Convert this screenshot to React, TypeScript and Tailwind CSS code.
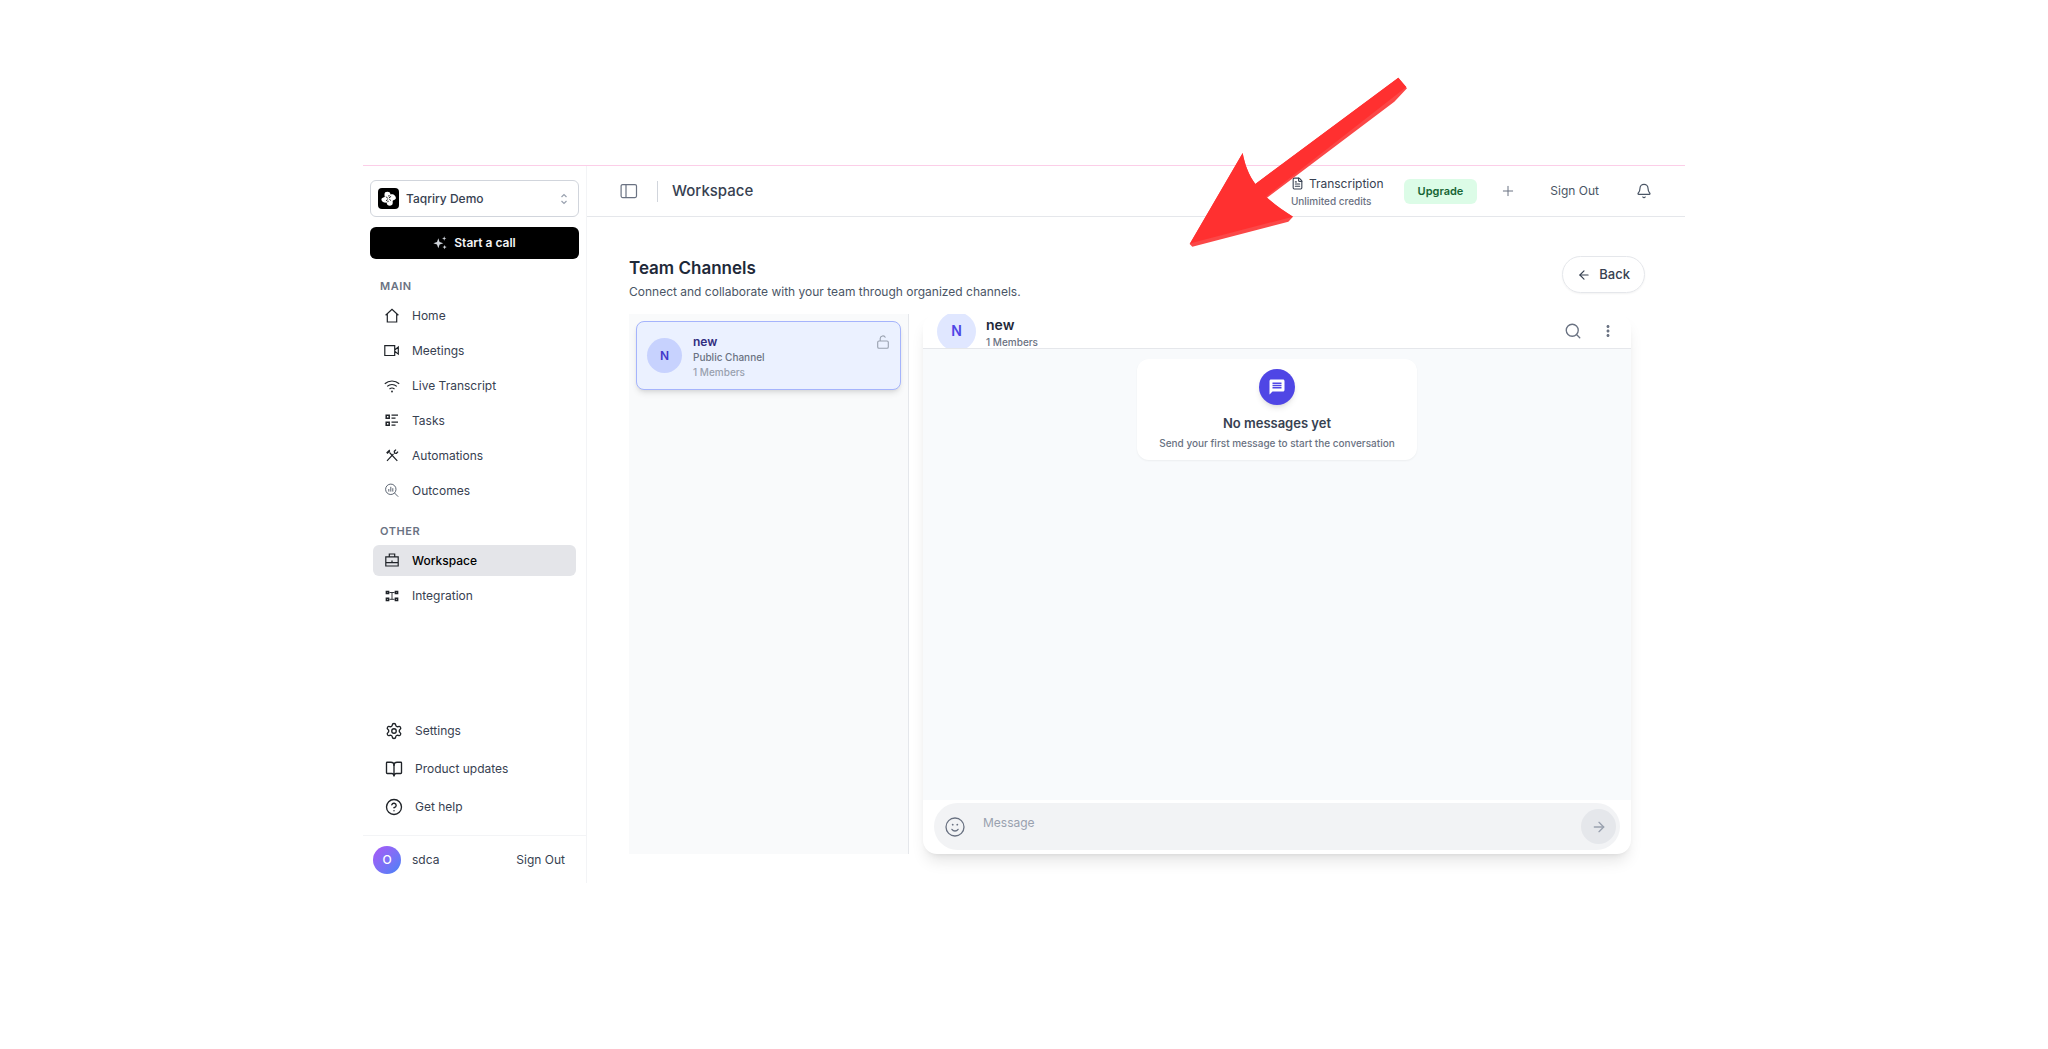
import type { ReactNode } from "react";
import {
  ArrowLeft,
  ArrowRight,
  Bell,
  BookOpen,
  CircleHelp,
  FileText,
  Plus,
  Search,
  Settings,
} from "lucide-react";
import { MdMessage, MdMoreVert } from "react-icons/md";

function Svg({ children, className = "text-[#1f2328]" }: { children: ReactNode; className?: string }) {
  return (
    <svg
      viewBox="0 0 16 16"
      fill="none"
      stroke="currentColor"
      strokeWidth="1.2"
      className={`size-4 shrink-0 ${className}`}
      aria-hidden="true"
    >
      {children}
    </svg>
  );
}

const HomeIcon = () => (
  <Svg>
    <path d="M1.600 7.200 8 1.200l6.400 6M3.300 6v8h9.400V6" />
  </Svg>
);

const MeetingsIcon = () => (
  <Svg>
    <path d="M.8 2.600h9.900v9.900H.8zM10.700 7l3.600-2.900v7l-3.600-2.900" />
  </Svg>
);

const WifiIcon = () => (
  <Svg>
    <path d="M.8 5.700c4.100-3.600 10.300-3.600 14.400 0M3.200 8.400c2.800-2.300 6.800-2.300 9.600 0M5.500 11c1.500-1.200 3.500-1.200 5 0" />
    <circle cx="8" cy="13.500" r=".9" fill="currentColor" stroke="none" />
  </Svg>
);

const TasksIcon = () => (
  <Svg>
    <path d="M2.200 2.200h3v3h-3zM2.200 9.200h3v3h-3z" strokeWidth="1.500" />
    <path d="M7.500 2.200H14M7.500 5.200h4M7.500 9.200H14M7.500 12.200h4" />
  </Svg>
);

const AutomationsIcon = () => (
  <Svg>
    <path d="m3 12.800 6.500-7M13.300 12.800 5.500 4.500" strokeWidth="1.200" />
    <path d="M2.600 4.900 5.800 2M3 5.500l2.800-2.600" strokeWidth="1.300" />
    <path d="M12 1.600 10.300 3.300l.3 1.800 1.900.2L14 3.600" strokeWidth="1.300" />
  </Svg>
);

const OutcomesIcon = () => (
  <Svg className="text-[#4b5563]">
    <circle cx="6.800" cy="6.300" r="5.200" strokeWidth=".9" />
    <path d="m10.500 10 3.700 3.700M4.800 8.600V6M6.800 8.600V3.800M8.800 8.600V5.200" strokeWidth=".9" />
  </Svg>
);

const WorkspaceIcon = () => (
  <Svg>
    <path d="M1.800 3.800h12.400V13H1.800zM5.300 3.800V1h5.400v2.800M1.800 9.600h12.400M8 7.600v1.600" />
  </Svg>
);

const IntegrationIcon = () => (
  <Svg>
    <path
      d="M2.400 3.400h2.200v2.200H2.400zM11.400 3.400h2.200v2.200h-2.200zM2.400 10.200h2.200v2.200H2.400zM11.400 10.200h2.200v2.200h-2.200z"
      strokeWidth="1.500"
    />
    <path d="M5.400 4.500h5.200M5.400 11.300h5.200M8 4.500v6.800" strokeWidth=".9" />
  </Svg>
);

const mainLinks = [
  { label: "Home", icon: <HomeIcon /> },
  { label: "Meetings", icon: <MeetingsIcon /> },
  { label: "Live Transcript", icon: <WifiIcon /> },
  { label: "Tasks", icon: <TasksIcon /> },
  { label: "Automations", icon: <AutomationsIcon /> },
  { label: "Outcomes", icon: <OutcomesIcon /> },
];

const otherLinks = [
  { label: "Workspace", icon: <WorkspaceIcon />, active: true },
  { label: "Integration", icon: <IntegrationIcon /> },
];

const footerLinks = [
  { label: "Settings", icon: <Settings size={18} strokeWidth={1.8} /> },
  { label: "Product updates", icon: <BookOpen size={18} strokeWidth={1.8} /> },
  { label: "Get help", icon: <CircleHelp size={18} strokeWidth={1.8} /> },
];

function NavSection({
  title,
  links,
}: {
  title: string;
  links: { label: string; icon: ReactNode; active?: boolean }[];
}) {
  return (
    <section>
      <h2 className="pl-2.5 text-[11px] leading-4 font-semibold tracking-wider text-gray-500">{title}</h2>
      <ul className="mt-1.5 flex flex-col gap-1 px-[3px]">
        {links.map((l) => (
          <li key={l.label}>
            <a
              href="#"
              className={
                l.active
                  ? "flex h-[31px] items-center gap-3 rounded-md bg-[#e4e5e9] px-[11px] text-xs font-medium text-black"
                  : "flex h-[31px] items-center gap-3 rounded-md px-[11px] text-xs text-[#374151]"
              }
            >
              {l.icon}
              {l.label}
            </a>
          </li>
        ))}
      </ul>
    </section>
  );
}

function Logo() {
  return (
    <svg viewBox="0 0 21 21" className="size-[21px] shrink-0" aria-hidden="true">
      <rect width="21" height="21" rx="4" fill="#000" />
      <path
        d="M7.200 4.200c1.500-.9 3.600-.6 4.600.4.500.6.500 1.300.7 1.900 1.300-.5 3.300-.3 4.200.9.900 1 1.600 2.600 1 3.300-.8 1-2.300 1.300-3.100 2.200.4 1.500.2 3.300-.8 4.200-1.200.9-3.300.7-4.200-.2-.6-.6-.7-1.600-1.100-2.400-1.400.3-3.100.1-4-.9-.8-.9-1.500-2.300-.8-3.200.7-.8 2.300-.9 3.100-1.700-.4-1.300-.6-3.500.4-4.500z"
        fill="#fff"
      />
      <path
        d="m8.200 8.600 1.500 1.900M13.100 8.400l-2.200 1.400M8 12.700l1.700-1M12.900 12.500l-1.600-1.300M11.100 7l-.3 1.500M9.800 14.200l.4-1.400"
        stroke="#000"
        strokeWidth=".9"
      />
    </svg>
  );
}

function Sidebar() {
  return (
    <aside className="flex w-56 shrink-0 flex-col border-r border-gray-100">
      <div className="px-[7px] pt-3.5">
        <button className="flex h-[37px] w-full items-center rounded-md border border-gray-300 px-[7px] text-xs font-medium text-[#374151]">
          <Logo />
          <span className="ml-[7px]">Taqriry Demo</span>
          <svg
            viewBox="0 0 8 12"
            className="ml-auto mr-[3px] h-3 w-2 text-gray-400"
            fill="none"
            stroke="currentColor"
            strokeWidth="1.200"
            aria-hidden="true"
          >
            <path d="M1.500 4 4 1.500 6.500 4M1.500 8 4 10.500 6.500 8" />
          </svg>
        </button>
        <button className="mt-2.5 flex h-8 w-full items-center justify-center gap-[7px] rounded-md bg-black text-xs font-semibold text-gray-100">
          <svg viewBox="0 0 14 14" className="size-3.5 text-gray-300" fill="currentColor" aria-hidden="true">
            <path d="M5.300 2.300 6.600 6l3.700 1.200-3.700 1.300-1.300 3.700L4 8.500.3 7.200 4 6z" />
            <path d="m11.200.3.6 1.600 1.600.6-1.600.6-.6 1.600-.6-1.600L9 2.500l1.600-.6zM11.600 9l.6 1.500 1.500.6-1.500.6-.6 1.500-.6-1.500-1.500-.6 1.500-.6z" />
          </svg>
          Start a call
        </button>
        <nav aria-label="Primary" className="mt-[19px] flex flex-col gap-[17px]">
          <NavSection title="MAIN" links={mainLinks} />
          <NavSection title="OTHER" links={otherLinks} />
        </nav>
      </div>
      <ul className="mt-auto flex flex-col gap-1.5 px-[22px] pb-3">
        {footerLinks.map((l) => (
          <li key={l.label}>
            <a href="#" className="flex h-8 items-center gap-3 text-xs text-[#374151]">
              <span className="text-[#1f2328]">{l.icon}</span>
              {l.label}
            </a>
          </li>
        ))}
      </ul>
      <div className="flex h-12 items-center border-t border-gray-100 pr-[21px] pl-2.5 text-xs text-[#374151]">
        <span className="grid size-7 place-items-center rounded-full bg-linear-to-br from-[#a855f7] to-[#3b82f6] font-medium text-white">
          O
        </span>
        <span className="ml-[11px]">sdca</span>
        <button className="ml-auto">Sign Out</button>
      </div>
    </aside>
  );
}

function TopBar() {
  return (
    <header className="flex h-[51px] items-center border-b border-gray-200 px-[33px] text-gray-600">
      <button aria-label="Toggle sidebar" className="text-gray-500">
        <svg
          viewBox="0 0 18 16"
          className="h-4 w-[18px]"
          fill="none"
          stroke="currentColor"
          strokeWidth="1.200"
          aria-hidden="true"
        >
          <rect x="1.100" y="1.600" width="15.400" height="13" rx="1.500" />
          <path d="M6 1.600v13" />
        </svg>
      </button>
      <div className="ml-[19px] h-[21px] w-px bg-gray-300" />
      <h1 className="ml-3.5 text-[15px] font-medium text-[#374151]">Workspace</h1>
      <div className="ml-auto flex items-center">
        <div className="pt-[3px]">
          <div className="flex items-center gap-[5px] text-xs leading-4 text-[#374151]">
            <FileText size={13} strokeWidth={2} />
            Transcription
          </div>
          <div className="text-[10px] leading-[18px] font-medium text-gray-500">Unlimited credits</div>
        </div>
        <button className="ml-5 h-[25px] rounded-md bg-[#dcfce7] px-3.5 text-[11px] font-semibold text-[#166534]">
          Upgrade
        </button>
        <button aria-label="Add" className="ml-[23px] text-gray-500">
          <Plus size={16} strokeWidth={1.5} />
        </button>
        <button className="ml-[34px] text-xs">Sign Out</button>
        <button aria-label="Notifications" className="ml-[37px]">
          <Bell size={16} strokeWidth={1.8} />
        </button>
      </div>
    </header>
  );
}

function ChannelList() {
  return (
    <div className="w-[280px] shrink-0 border-r border-gray-200 bg-[#f9fafb] px-[7px] pt-[7px]">
      <button className="flex h-[69px] w-full items-center rounded-lg border border-[#a5b4fc] bg-[#ebf1ff] pr-[11px] pl-2.5 text-left shadow-md">
        <span className="grid size-[35px] place-items-center rounded-full bg-[#c7d2fe] text-xs font-semibold text-[#4338ca]">
          N
        </span>
        <span className="mt-0.5 ml-[11px] flex flex-col text-[10px] leading-[15px] font-medium">
          <span className="text-xs leading-4 font-semibold text-[#312e81]">new</span>
          <span className="text-gray-500">Public Channel</span>
          <span className="text-gray-400">1 Members</span>
        </span>
        <svg
          viewBox="0 0 12 14"
          className="mb-7 ml-auto h-3.5 w-3 text-gray-400"
          fill="none"
          stroke="currentColor"
          strokeWidth="1.100"
          aria-hidden="true"
        >
          <rect x=".7" y="6" width="10.600" height="7.200" rx="1.300" />
          <path d="M3.200 6V3.600a2.700 2.700 0 0 1 5.200-1" />
        </svg>
      </button>
    </div>
  );
}

function Conversation() {
  return (
    <section className="flex min-w-0 flex-1 flex-col overflow-hidden rounded-[14px] bg-white shadow-lg">
      <div className="flex h-[35px] shrink-0 items-center overflow-hidden border-b border-gray-200 px-3.5">
        <span className="grid size-[39px] shrink-0 place-items-center rounded-full bg-[#e0e7ff] text-sm font-semibold text-[#4f46e5]">
          N
        </span>
        <div className="mt-1 ml-2.5">
          <h3 className="text-sm leading-[18px] font-semibold text-gray-800">new</h3>
          <p className="text-[10px] leading-4 font-medium text-gray-500">1 Members</p>
        </div>
        <button aria-label="Search" className="ml-auto text-gray-500">
          <Search size={18} strokeWidth={1.8} />
        </button>
        <button aria-label="More options" className="ml-[17px] text-gray-500">
          <MdMoreVert size={18} />
        </button>
      </div>
      <div className="flex flex-1 justify-center bg-[#f8fafc] pt-2.5">
        <div className="flex h-[101px] flex-col items-center rounded-xl bg-white px-[22px] pt-2.5 shadow-xs">
          <span className="grid size-9 place-items-center rounded-full bg-[#4f46e5] text-white shadow-md">
            <MdMessage size={18} />
          </span>
          <h3 className="mt-2 text-[13px] leading-5 font-semibold text-[#374151]">No messages yet</h3>
          <p className="mt-0.5 text-[10px] leading-4 font-medium text-gray-500">
            Send your first message to start the conversation
          </p>
        </div>
      </div>
      <form className="px-[11px] pt-[3px] pb-1" onSubmit={(e) => e.preventDefault()}>
        <div className="flex h-[47px] items-center rounded-full bg-[#f2f3f5] pr-1 pl-[11px]">
          <button type="button" aria-label="Insert emoji" className="text-gray-500">
            <svg
              viewBox="0 0 20 20"
              className="size-5"
              fill="none"
              stroke="currentColor"
              strokeWidth="1.300"
              strokeLinecap="round"
              aria-hidden="true"
            >
              <circle cx="10" cy="10" r="9" />
              <path d="M6.900 12.400c1.500 2.100 4.700 2.100 6.200 0" />
              <path d="M7.700 7.600v.1M12.300 7.600v.1" strokeWidth="1.800" />
            </svg>
          </button>
          <input
            aria-label="Message"
            placeholder="Message"
            className="mb-2 ml-[18px] min-w-0 flex-1 bg-transparent text-xs outline-none placeholder:text-gray-400"
          />
          <button
            aria-label="Send"
            className="grid size-[35px] place-items-center rounded-full bg-gray-200 text-gray-400"
          >
            <ArrowRight size={16} strokeWidth={2} />
          </button>
        </div>
      </form>
    </section>
  );
}

function PointerArrow() {
  return (
    <svg
      viewBox="0 0 660 520"
      className="pointer-events-none absolute top-[77px] left-[1189px] w-[220px]"
      aria-hidden="true"
    >
      <path d="M2 501 161 228c6 34 18 66 38 93L628 2l26 32-38 40L234 362c22 20 48 38 78 57l-14 15L10 509z" fill="#fb4747" />
      <path d="M2 501 161 228c6 34 18 66 38 93L628 2l24 28L231 359c22 20 50 42 81 60L8 498z" fill="#ff3030" />
    </svg>
  );
}

export default function App() {
  return (
    <div className="relative min-h-screen bg-white px-[363px] pt-[165px] font-['Inter',sans-serif] antialiased">
      <div className="flex border-t border-pink-200">
        <Sidebar />
        <main className="min-w-0 flex-1">
          <TopBar />
          <div className="pt-[39px] pr-10 pb-[29px] pl-[42px]">
            <div className="flex items-start justify-between">
              <div>
                <h2 className="text-[17px] leading-6 font-semibold text-gray-800">Team Channels</h2>
                <p className="mt-0.5 text-xs leading-5 text-gray-600">
                  Connect and collaborate with your team through organized channels.
                </p>
              </div>
              <button className="flex h-[37px] items-center gap-2 rounded-full border border-gray-200 px-3.5 text-[13px] font-medium text-[#374151] shadow-xs">
                <ArrowLeft size={14} strokeWidth={2} />
                Back
              </button>
            </div>
            <div className="mt-3 mr-3.5 flex h-[540px] gap-3.5">
              <ChannelList />
              <Conversation />
            </div>
          </div>
        </main>
      </div>
      <PointerArrow />
    </div>
  );
}
